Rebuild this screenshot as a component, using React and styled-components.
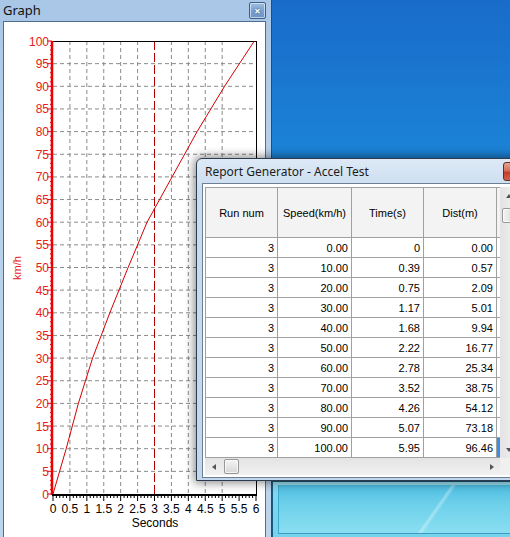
import React from 'react'
import styled, { createGlobalStyle } from 'styled-components'

const GlobalStyle = createGlobalStyle`
  html, body {
    margin: 0;
    padding: 0;
    overflow: hidden;
  }
  body {
    font-family: "Liberation Sans", Arial, sans-serif;
  }
`

const rows = [
	[3, '0.00', '0', '0.00'],
	[3, '10.00', '0.39', '0.57'],
	[3, '20.00', '0.75', '2.09'],
	[3, '30.00', '1.17', '5.01'],
	[3, '40.00', '1.68', '9.94'],
	[3, '50.00', '2.22', '16.77'],
	[3, '60.00', '2.78', '25.34'],
	[3, '70.00', '3.52', '38.75'],
	[3, '80.00', '4.26', '54.12'],
	[3, '90.00', '5.07', '73.18'],
	[3, '100.00', '5.95', '96.46'],
]

const Desktop = styled.div`
	position: relative;
	width: 510px;
	height: 537px;
	overflow: hidden;
	background: linear-gradient(180deg, #196bca 0%, #1b80d5 25%, #1d95de 55%, #27a6e4 85%);
`

// window sitting behind, visible bottom right
const BackWindow = styled.div`
	position: absolute;
	left: 272px;
	top: 481px;
	width: 250px;
	height: 70px;
	box-sizing: border-box;
	border-top: 1px solid #1b5a80;
	border-left: 1px solid #1b5a80;
	padding: 3px 0 0 5px;
	background: linear-gradient(180deg, #a6e6f5 0%, #7fd8ee 10%, #72d2ea 100%);
`

const BackPane = styled.div`
	height: 48px;
	border-left: 1px solid #3ea8d0;
	border-bottom: 1px solid #3a9cc4;
	background:
		linear-gradient(125deg, transparent 62%, rgba(255, 255, 255, 0.35) 63%, transparent 64.5%),
		linear-gradient(180deg, #4fbde2 0%, #6dd0ea 40%, #8adff2 100%);
`

const GraphWindow = styled.div`
	position: absolute;
	left: 0;
	top: 0;
	width: 272px;
	height: 560px;
	box-sizing: border-box;
	display: flex;
	flex-direction: column;
	padding: 0 5px 0 3px;
	border-right: 1px solid #2a4c70;
	background: linear-gradient(180deg, #a8c6e6 0%, #b6d0eb 25%, #bdd5ec 100%);
`

const ToolTitleBar = styled.div`
	height: 21px;
	display: flex;
	align-items: center;
	justify-content: space-between;
	font-family: "Noto Sans", "Open Sans", sans-serif;
	font-size: 13px;
	color: #111;
`

const ToolTitle = styled.span`
	margin-top: -2px;
`

const ToolClose = styled.div`
	width: 15px;
	height: 15px;
	margin: -1px 0 0 0;
	border: 1px solid #3d6089;
	border-radius: 2px;
	box-shadow: inset 0 0 0 1px rgba(255, 255, 255, 0.55);
	background: linear-gradient(180deg, #9ebfe2 0%, #7aa2cf 50%, #6b95c6 100%);
	display: flex;
	align-items: center;
	justify-content: center;
	color: #fff;
	font-size: 11px;
	font-weight: bold;
	line-height: 1;
	text-shadow: 0 0 2px #24466e;
`

const GraphClient = styled.div`
	flex: 1;
	border: 1px solid #4f6e8e;
	background: #fff;
	overflow: hidden;
`

const ChartSvg = styled.svg`
	display: block;
	font-family: "Liberation Sans", Arial, sans-serif;
`

const ReportWindow = styled.div`
	position: absolute;
	left: 196px;
	top: 158px;
	width: 358px;
	height: 323px;
	box-sizing: border-box;
	display: flex;
	flex-direction: column;
	padding: 0 0 2px 5px;
	border: 1px solid #2b3a4c;
	border-radius: 6px 6px 0 0;
	background: linear-gradient(180deg, #dde9f6 0%, #cadcef 10%, #c3d7ec 100%);
	box-shadow: 0 0 10px 2px rgba(0, 0, 0, 0.45);
`

const TitleBar = styled.div`
	height: 24px;
	display: flex;
	align-items: flex-start;
	justify-content: space-between;
`

const Title = styled.span`
	margin: 4px 0 0 3px;
	font-family: "Noto Sans", "Open Sans", sans-serif;
	font-size: 12px;
	color: #1c1c1c;
`

const CloseButton = styled.div`
	width: 43px;
	height: 19px;
	margin: 3px 7px 0 0;
	border: 1px solid #6b2a25;
	border-radius: 3px;
	box-sizing: border-box;
	background: linear-gradient(180deg, #e8a493 0%, #d2705c 45%, #c23f2b 55%, #d2624c 100%);
`

const Client = styled.div`
	flex: 1;
	display: flex;
	flex-direction: column;
	border: 1px solid #6c7f94;
	background: #fff;
	padding: 3px 0 2px 2px;
`

const GridArea = styled.div`
	display: flex;
`

const Grid = styled.div`
	display: grid;
	grid-template-columns: 72px 74px 72px 73px 3px;
	grid-template-rows: 50px;
	grid-auto-rows: 20px;
	width: 295px;
	box-sizing: border-box;
	border-left: 1px solid #a0a0a0;
	border-top: 1px solid #a0a0a0;
	font-size: 11px;
	color: #000;
`

const Cell = styled.div`
	box-sizing: border-box;
	display: flex;
	align-items: center;
	justify-content: ${({ $head }) => ($head ? 'center' : 'flex-end')};
	padding-right: ${({ $head }) => ($head ? '0' : '3px')};
	border-right: ${({ $edge }) => ($edge ? 'none' : '1px solid #a0a0a0')};
	border-bottom: 1px solid #a0a0a0;
	background: ${({ $head, $selected }) => ($selected ? '#3b8de6' : $head ? '#f3f3f3' : '#fff')};
	white-space: nowrap;
`

const VScroll = styled.div`
	width: 17px;
	display: flex;
	flex-direction: column;
	background: linear-gradient(90deg, #e3e3e3, #f1f1f1);
`

const HScrollRow = styled.div`
	display: flex;
	height: 17px;
`

const HScroll = styled.div`
	width: 295px;
	display: flex;
	align-items: center;
	background: linear-gradient(180deg, #e3e3e3, #f1f1f1);
`

const Corner = styled.div`
	width: 17px;
	background: #f0f0f0;
`

const ArrowBox = styled.div`
	width: 17px;
	height: 17px;
	flex: none;
	display: flex;
	align-items: center;
	justify-content: center;
`

const Spacer = styled.div`
	flex: 1;
`

const Arrow = styled.div`
	width: 0;
	height: 0;
	border-style: solid;
	border-color: transparent;
	${({ $dir }) =>
		$dir === 'up'
			? 'border-width: 0 3.5px 4px 3.5px; border-bottom-color: #555;'
			: $dir === 'down'
			? 'border-width: 4px 3.5px 0 3.5px; border-top-color: #555;'
			: $dir === 'left'
			? 'border-width: 3.5px 4px 3.5px 0; border-right-color: #555;'
			: 'border-width: 3.5px 0 3.5px 4px; border-left-color: #555;'}
`

const Thumb = styled.div`
	flex: none;
	box-sizing: border-box;
	width: ${({ $vertical }) => ($vertical ? '14px' : '15px')};
	height: 15px;
	margin: ${({ $vertical }) => ($vertical ? '4px 0 0 2px' : '0 0 0 2px')};
	border: 1px solid #979797;
	border-radius: 2px;
	background: linear-gradient(
		${({ $vertical }) => ($vertical ? '90deg' : '180deg')},
		#f4f4f4 0%,
		#e6e6e6 50%,
		#d6d6d6 100%
	);
	box-shadow: inset 0 0 0 1px rgba(255, 255, 255, 0.7);
`

// chart geometry, in page coordinates
const X0 = 53
const X1 = 256
const Y0 = 494
const Y1 = 41
const tx = (t) => X0 + (t * (X1 - X0)) / 6
const vy = (v) => Y0 - (v * (Y0 - Y1)) / 100

const range = (n, step) => Array.from({ length: n }, (_, i) => +(i * step).toFixed(2))

const Chart = () => {
	const curve = rows.map((r) => `${tx(parseFloat(r[2]))},${vy(parseFloat(r[1]))}`).join(' ')
	return (
		<ChartSvg width='262' height='520' viewBox='4 22 262 520'>
			{range(11, 0.5)
				.filter((t) => t > 0 && t !== 3)
				.map((t) => (
					<line key={'v' + t} x1={tx(t)} x2={tx(t)} y1={Y1} y2={Y0} stroke='#8a8a8a' strokeDasharray='4 3' />
				))}
			{range(20, 5)
				.filter((v) => v > 0)
				.map((v) => (
					<line key={'h' + v} x1={X0} x2={X1} y1={vy(v)} y2={vy(v)} stroke='#8a8a8a' strokeDasharray='4 3' />
				))}
			<line x1={tx(3)} x2={tx(3)} y1={Y1} y2={Y0} stroke='#b00000' strokeDasharray='9 3' />
			<line x1={X0} x2={X1 + 0.5} y1={Y1 + 0.5} y2={Y1 + 0.5} stroke='#000' />
			<line x1={X1 + 0.5} x2={X1 + 0.5} y1={Y1} y2={Y0} stroke='#000' />
			<polyline points={curve} fill='none' stroke='#d40000' strokeWidth='1' strokeLinejoin='round' />

			{range(101, 1).map((v) => (
				<line key={'yt' + v} x1={v % 5 === 0 ? 47 : 50} x2={52} y1={vy(v)} y2={vy(v)} stroke='#ee0000' />
			))}
			<line x1={52} x2={52} y1={Y1} y2={Y0 + 1} stroke='#ee0000' strokeWidth='2.5' />
			{range(21, 5).map((v) => (
				<text key={'yl' + v} x={49} y={vy(v) + 4.5} textAnchor='end' fontSize='12' fill='#e8201c'>
					{v}
				</text>
			))}

			{range(61, 0.1).map((t, i) => (
				<line key={'xt' + i} x1={tx(t)} x2={tx(t)} y1={495} y2={i % 5 === 0 ? 501 : 498} stroke='#000' />
			))}
			<line x1={X0 - 1} x2={X1 + 1} y1={495} y2={495} stroke='#000' strokeWidth='2' />
			{range(13, 0.5).map((t) => (
				<text key={'xl' + t} x={tx(t)} y={513} textAnchor='middle' fontSize='12' fill='#000'>
					{t % 1 === 0 ? t : t.toFixed(1)}
				</text>
			))}

			<text x={155} y={527} textAnchor='middle' fontSize='12' fill='#000'>
				Seconds
			</text>
			<text x={21} y={268} textAnchor='middle' fontSize='11' fill='#e8201c' transform='rotate(-90 21 268)'>
				km/h
			</text>
		</ChartSvg>
	)
}

const App = () => {
	return (
		<>
			<GlobalStyle />
			<Desktop>
				<BackWindow>
					<BackPane />
				</BackWindow>

				<GraphWindow>
					<ToolTitleBar>
						<ToolTitle>Graph</ToolTitle>
						<ToolClose>×</ToolClose>
					</ToolTitleBar>
					<GraphClient>
						<Chart />
					</GraphClient>
				</GraphWindow>

				<ReportWindow>
					<TitleBar>
						<Title>Report Generator - Accel Test</Title>
						<CloseButton />
					</TitleBar>
					<Client>
						<GridArea>
							<Grid>
								<Cell $head>Run num</Cell>
								<Cell $head>Speed(km/h)</Cell>
								<Cell $head>Time(s)</Cell>
								<Cell $head>Dist(m)</Cell>
								<Cell $head $edge />
								{rows.map((r, i) => (
									<React.Fragment key={i}>
										<Cell>{r[0]}</Cell>
										<Cell>{r[1]}</Cell>
										<Cell>{r[2]}</Cell>
										<Cell>{r[3]}</Cell>
										<Cell $edge $selected={i === rows.length - 1} />
									</React.Fragment>
								))}
							</Grid>
							<VScroll>
								<ArrowBox>
									<Arrow $dir='up' />
								</ArrowBox>
								<Thumb $vertical />
								<Spacer />
								<ArrowBox>
									<Arrow $dir='down' />
								</ArrowBox>
							</VScroll>
						</GridArea>
						<HScrollRow>
							<HScroll>
								<ArrowBox>
									<Arrow $dir='left' />
								</ArrowBox>
								<Thumb />
								<Spacer />
								<ArrowBox>
									<Arrow $dir='right' />
								</ArrowBox>
							</HScroll>
							<Corner />
						</HScrollRow>
					</Client>
				</ReportWindow>
			</Desktop>
		</>
	)
}

export default App
